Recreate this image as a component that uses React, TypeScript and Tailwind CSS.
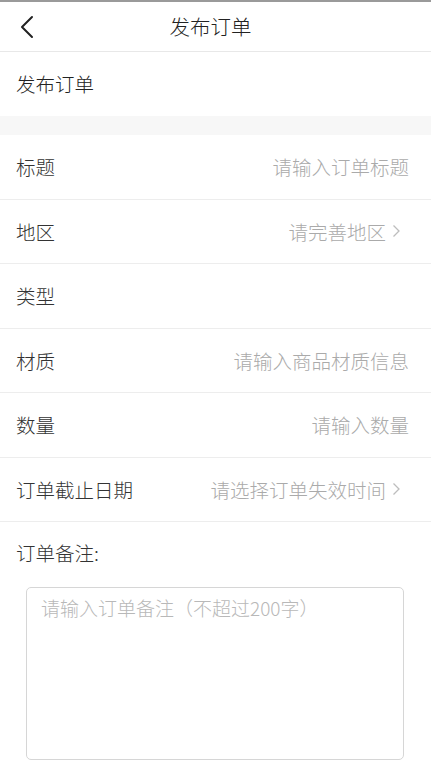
import React from "react";

const font = { fontFamily: '"Noto Sans CJK SC", "Noto Sans", sans-serif' };

function Chevron() {
  return (
    <svg width="9" height="14" viewBox="0 0 9 14" className="ml-[6px]" fill="none">
      <path d="M1.5 1.5 L7 7 L1.5 12.5" stroke="#bdbdbd" strokeWidth="1.3" />
    </svg>
  );
}

function Row({ label, placeholder, arrow }: { label: string; placeholder?: string; arrow?: boolean }) {
  return (
    <div
      className={
        arrow
          ? "flex h-[64.5px] items-center justify-between border-b border-[#ededed] pl-[16px] pr-[30px]"
          : "flex h-[64.5px] items-center justify-between border-b border-[#ededed] pl-[16px] pr-[22px]"
      }
    >
      <span className="text-[19.5px] font-light text-[#333333]">{label}</span>
      {placeholder && (
        <div className="flex items-center">
          <span className="text-[19.5px] font-light text-[#aaaaaa]">{placeholder}</span>
          {arrow && <Chevron />}
        </div>
      )}
    </div>
  );
}

export default function App() {
  return (
    <div className="min-h-[768px] w-[431px] bg-white" style={font}>
      <div className="h-[2px] bg-[#9a9a9a]" />
      <div className="relative flex h-[50px] items-center justify-center border-b border-[#e8e8e8] pr-[10px]">
        <svg className="absolute left-[19px] top-[13px]" width="16" height="24" viewBox="0 0 16 24" fill="none">
          <path d="M13 2 L3 12 L13 22" stroke="#222" strokeWidth="2" strokeLinecap="round" strokeLinejoin="round" />
        </svg>
        <span className="text-[20.5px] font-light text-[#222]">发布订单</span>
      </div>
      <div className="flex h-[64px] items-center pl-[16px]">
        <span className="text-[19.5px] font-light text-[#222]">发布订单</span>
      </div>
      <div className="h-[19px] bg-[#f7f7f7]" />
      <Row label="标题" placeholder="请输入订单标题" />
      <Row label="地区" placeholder="请完善地区" arrow />
      <Row label="类型" />
      <Row label="材质" placeholder="请输入商品材质信息" />
      <Row label="数量" placeholder="请输入数量" />
      <Row label="订单截止日期" placeholder="请选择订单失效时间" arrow />
      <div className="pl-[16px] pt-[16px]">
        <span className="text-[19.5px] font-light text-[#333333]">订单备注:</span>
      </div>
      <div className="ml-[26px] mt-[20px] h-[173px] w-[378px] rounded-[5px] border border-[#d6d6d6] px-[14px] pt-[6px]">
        <span className="text-[19px] font-light text-[#b8b8b8]">请输入订单备注（不超过200字）</span>
      </div>
    </div>
  );
}
